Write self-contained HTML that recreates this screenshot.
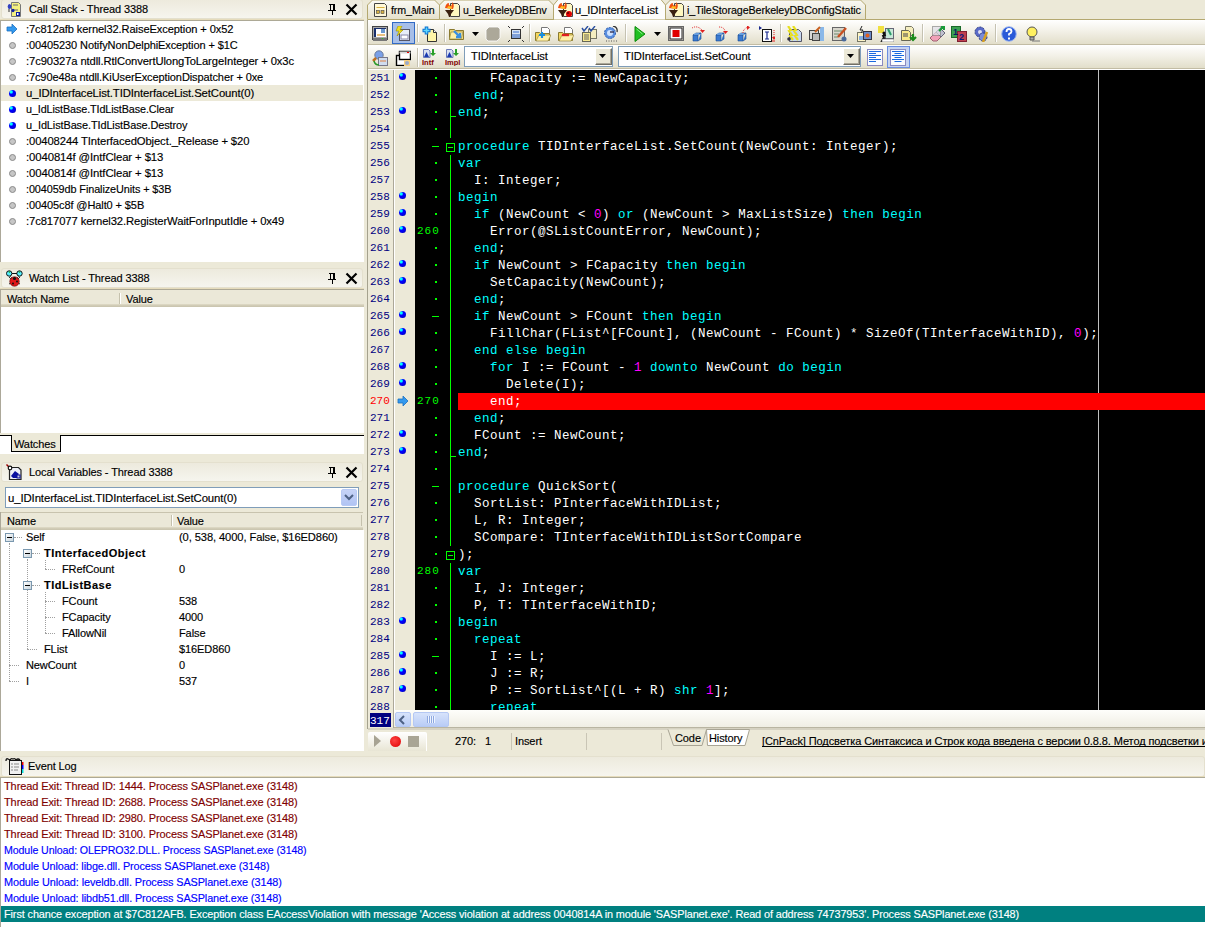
<!DOCTYPE html><html><head><meta charset="utf-8"><style>
*{margin:0;padding:0;box-sizing:border-box}
html,body{width:1205px;height:927px;overflow:hidden;background:#ECE9D8;font-family:"Liberation Sans",sans-serif;font-size:11px;color:#000}
.ab{position:absolute}
.t{position:absolute;white-space:pre;line-height:16px;letter-spacing:-0.1px;-webkit-text-stroke:0.15px currentColor}
.b{font-weight:bold;letter-spacing:0.45px}
.hdr{position:absolute;background:linear-gradient(#EDEADD,#F6F5EE);border:1px solid #E4E0CE;border-radius:3px}
.hline{position:absolute;height:2px;background:linear-gradient(#E6DCBC 50%,#ADA996 50%)}
.code{position:absolute;font-family:"Liberation Mono",monospace;font-size:12.5px;letter-spacing:0.5px;white-space:pre;line-height:17px;color:#fff}
.k{color:#00FFFF}.n{color:#FF00FF}
.ln{position:absolute;font-family:"Liberation Mono",monospace;font-size:11px;white-space:pre;line-height:17px;color:#000080}
.gn{position:absolute;font-family:"Liberation Mono",monospace;font-size:11px;letter-spacing:1px;white-space:pre;line-height:17px;color:#00FF00}
.dot{position:absolute;width:7px;height:7px;border-radius:50%;background:radial-gradient(circle at 32% 28%,#0ff 0,#0ff 14%,#00f 32%,#0000E8 65%,#000070 100%)}
.gdot{position:absolute;width:7px;height:7px;border-radius:50%;background:#C6C6C6;border:1px solid #8A8A8A}
</style></head><body>
<div class="hdr" style="left:1px;top:-1px;width:362px;height:20px"></div>
<svg class="ab" style="left:6px;top:1px" width="16" height="17"><path d="M5.5 1.5h7l2 2v12h-9z" fill="#F5F080" stroke="#777"/><path d="M7 4h5M7 9h5" stroke="#667"/><ellipse cx="3.5" cy="5.5" rx="1.8" ry="2.5" fill="#3040C0"/><ellipse cx="7" cy="9.5" rx="1.5" ry="1.8" fill="#1020A0"/><rect x="10" y="11" width="4" height="4" fill="#1020A0"/><rect x="11" y="12" width="1.5" height="2" fill="#fff"/><path d="M3 8v3" stroke="#333"/></svg>
<div class="t" style="left:29px;top:1px">Call Stack - Thread 3388</div>
<svg class="ab" style="left:327px;top:3px" width="10" height="12"><path d="M2 1h6M3 1v6M7 1v6M6 1v6M1 7h8M5 7v5" stroke="#000" stroke-width="1" fill="none" shape-rendering="crispEdges"/></svg>
<svg class="ab" style="left:345px;top:3px" width="13" height="13"><path d="M1.5 1.5L11.5 11.5M11.5 1.5L1.5 11.5" stroke="#000" stroke-width="2.2" fill="none"/></svg>
<div class="hline" style="left:0;top:19px;width:364px"></div>
<div class="ab" style="left:0;top:21px;width:364px;height:241px;background:#fff;border-left:1px solid #ACA899"></div>
<svg class="ab" style="left:6px;top:23px" width="12" height="12"><path d="M1 4h5V1l5 5-5 5V8H1z" fill="#3399ee" stroke="#1a6fc0" stroke-width="0.8"/></svg>
<div class="t" style="left:26px;top:21px;transform:scaleX(1.009);transform-origin:0 0">:7c812afb kernel32.RaiseException + 0x52</div>
<div class="gdot" style="left:9px;top:42px"></div>
<div class="t" style="left:26px;top:37px;transform:scaleX(1.0);transform-origin:0 0">:00405230 NotifyNonDelphiException + $1C</div>
<div class="gdot" style="left:9px;top:58px"></div>
<div class="t" style="left:26px;top:53px;transform:scaleX(1.019);transform-origin:0 0">:7c90327a ntdll.RtlConvertUlongToLargeInteger + 0x3c</div>
<div class="gdot" style="left:9px;top:74px"></div>
<div class="t" style="left:26px;top:69px;transform:scaleX(1.0);transform-origin:0 0">:7c90e48a ntdll.KiUserExceptionDispatcher + 0xe</div>
<div class="ab" style="left:1px;top:85px;width:362px;height:16px;background:#ECE9D8"></div>
<div class="dot" style="left:9px;top:90px"></div>
<div class="t" style="left:26px;top:85px;transform:scaleX(1.029);transform-origin:0 0">u_IDInterfaceList.TIDInterfaceList.SetCount(0)</div>
<div class="dot" style="left:9px;top:106px"></div>
<div class="t" style="left:26px;top:101px;transform:scaleX(0.98);transform-origin:0 0">u_IdListBase.TIdListBase.Clear</div>
<div class="dot" style="left:9px;top:122px"></div>
<div class="t" style="left:26px;top:117px;transform:scaleX(0.993);transform-origin:0 0">u_IdListBase.TIdListBase.Destroy</div>
<div class="gdot" style="left:9px;top:138px"></div>
<div class="t" style="left:26px;top:133px;transform:scaleX(1.022);transform-origin:0 0">:00408244 TInterfacedObject._Release + $20</div>
<div class="gdot" style="left:9px;top:154px"></div>
<div class="t" style="left:26px;top:149px;transform:scaleX(1.032);transform-origin:0 0">:0040814f @IntfClear + $13</div>
<div class="gdot" style="left:9px;top:170px"></div>
<div class="t" style="left:26px;top:165px;transform:scaleX(1.032);transform-origin:0 0">:0040814f @IntfClear + $13</div>
<div class="gdot" style="left:9px;top:186px"></div>
<div class="t" style="left:26px;top:181px;transform:scaleX(0.987);transform-origin:0 0">:004059db FinalizeUnits + $3B</div>
<div class="gdot" style="left:9px;top:202px"></div>
<div class="t" style="left:26px;top:197px;transform:scaleX(1.0);transform-origin:0 0">:00405c8f @Halt0 + $5B</div>
<div class="gdot" style="left:9px;top:218px"></div>
<div class="t" style="left:26px;top:213px;transform:scaleX(1.023);transform-origin:0 0">:7c817077 kernel32.RegisterWaitForInputIdle + 0x49</div>
<div class="hdr" style="left:1px;top:268px;width:362px;height:20px"></div>
<svg class="ab" style="left:5px;top:269px" width="20" height="18"><circle cx="4.2" cy="4.5" r="2.7" fill="#5ef" stroke="#111" stroke-width="1"/><circle cx="14.5" cy="4.5" r="2.7" fill="#5ef" stroke="#111" stroke-width="1"/><path d="M7 4.5h5" stroke="#111"/><path d="M4 3.5l1-1M14 3.5l1-1" stroke="#2a2" stroke-width="1.2"/><path d="M5 7l4 4M14 7l-4 4" stroke="#555"/><path d="M4 8l2 2M15 8l-2 2M4 15l2-1M15 15l-2-1" stroke="#333"/><circle cx="9.5" cy="12.5" r="4.8" fill="#E01818" stroke="#400" stroke-width=".5"/><circle cx="9.5" cy="9.5" r="1.6" fill="#111"/><circle cx="8" cy="14.5" r="1" fill="#111"/><circle cx="12" cy="12.5" r="1" fill="#111"/></svg>
<div class="t" style="left:29px;top:270px">Watch List - Thread 3388</div>
<svg class="ab" style="left:327px;top:272px" width="10" height="12"><path d="M2 1h6M3 1v6M7 1v6M6 1v6M1 7h8M5 7v5" stroke="#000" stroke-width="1" fill="none" shape-rendering="crispEdges"/></svg>
<svg class="ab" style="left:345px;top:272px" width="13" height="13"><path d="M1.5 1.5L11.5 11.5M11.5 1.5L1.5 11.5" stroke="#000" stroke-width="2.2" fill="none"/></svg>
<div class="hline" style="left:0;top:288px;width:364px"></div>
<div class="ab" style="left:0;top:290px;width:364px;height:17px;background:linear-gradient(#EBE8D8 0,#EBE8D8 14px,#E0DCC8 14px,#D6D1BC 15px,#CBC6B0 16px,#CBC6B0 17px);border-left:1px solid #ACA899"></div>
<div class="t" style="left:7px;top:291px">Watch Name</div>
<div class="ab" style="left:119px;top:293px;width:1px;height:11px;background:#C5C1AD"></div><div class="ab" style="left:120px;top:293px;width:1px;height:11px;background:#fff"></div>
<div class="t" style="left:126px;top:291px">Value</div>
<div class="ab" style="left:0;top:307px;width:364px;height:126px;background:#fff;border-left:1px solid #ACA899"></div>
<div class="ab" style="left:0;top:435px;width:364px;height:19px;background:#fff;border-top:1px solid #000"></div>
<div class="ab" style="left:11px;top:435px;width:50px;height:17px;background:#ECE9D8;border:1px solid #000;border-top:none"></div>
<div class="t" style="left:14px;top:436px">Watches</div>
<div class="hdr" style="left:1px;top:462px;width:362px;height:20px"></div>
<svg class="ab" style="left:5px;top:463px" width="20" height="20"><path d="M4.5 4.5h9l2.5 2.5v9.5h-11.5z" fill="#EEF0F8" stroke="#222" stroke-width="1.2"/><path d="M6 13l4-5 4 3-2 2v2H8z" fill="#0a10a0"/><rect x="12" y="12" width="3" height="3" fill="#ccd" stroke="#0a10a0"/><path d="M1.5 1.5L4 4" stroke="#900" stroke-width="1.5"/><circle cx="5" cy="5" r="1.8" fill="#fff" stroke="#111" stroke-width="1.2"/></svg>
<div class="t" style="left:29px;top:464px">Local Variables - Thread 3388</div>
<svg class="ab" style="left:327px;top:466px" width="10" height="12"><path d="M2 1h6M3 1v6M7 1v6M6 1v6M1 7h8M5 7v5" stroke="#000" stroke-width="1" fill="none" shape-rendering="crispEdges"/></svg>
<svg class="ab" style="left:345px;top:466px" width="13" height="13"><path d="M1.5 1.5L11.5 11.5M11.5 1.5L1.5 11.5" stroke="#000" stroke-width="2.2" fill="none"/></svg>
<div class="ab" style="left:5px;top:487px;width:354px;height:21px;background:#fff;border:1px solid #7F9DB9"></div>
<div class="t" style="left:8px;top:490px;transform:scaleX(1.033);transform-origin:0 0">u_IDInterfaceList.TIDInterfaceList.SetCount(0)</div>
<div class="ab" style="left:341px;top:489px;width:16px;height:17px;background:linear-gradient(#C6D3F7,#B1C4F4);border:1px solid #B8CAF5;border-radius:2px"></div>
<svg class="ab" style="left:344px;top:494px" width="10" height="8"><path d="M1 1l4 4 4-4" stroke="#4D6185" stroke-width="2" fill="none"/></svg>
<div class="ab" style="left:0;top:512px;width:363px;height:18px;background:linear-gradient(#C8C3AE 0,#C8C3AE 1px,#EBE8D8 1px,#EBE8D8 15px,#E0DCC8 15px,#D6D1BC 16px,#CBC6B0 17px,#CBC6B0 18px);border-left:1px solid #ACA899"></div>
<div class="t" style="left:7px;top:513px">Name</div>
<div class="ab" style="left:171px;top:515px;width:1px;height:11px;background:#C5C1AD"></div><div class="ab" style="left:172px;top:515px;width:1px;height:11px;background:#fff"></div><div class="ab" style="left:361px;top:515px;width:1px;height:11px;background:#C5C1AD"></div>
<div class="t" style="left:177px;top:513px">Value</div>
<div class="ab" style="left:0;top:530px;width:364px;height:221px;background:#fff;border-left:1px solid #ACA899"></div>
<div class="t" style="left:26px;top:529px;">Self</div>
<div class="t" style="left:179px;top:529px;transform:scaleX(1.014);transform-origin:0 0">(0, 538, 4000, False, $16ED860)</div>
<div class="t" style="left:44px;top:545px;font-weight:bold;letter-spacing:0.5px;">TInterfacedObject</div>
<div class="t" style="left:62px;top:561px;">FRefCount</div>
<div class="t" style="left:179px;top:561px;transform:scaleX(1);transform-origin:0 0">0</div>
<div class="t" style="left:44px;top:577px;font-weight:bold;letter-spacing:0.5px;">TIdListBase</div>
<div class="t" style="left:62px;top:593px;">FCount</div>
<div class="t" style="left:179px;top:593px;transform:scaleX(1);transform-origin:0 0">538</div>
<div class="t" style="left:62px;top:609px;">FCapacity</div>
<div class="t" style="left:179px;top:609px;transform:scaleX(1);transform-origin:0 0">4000</div>
<div class="t" style="left:62px;top:625px;">FAllowNil</div>
<div class="t" style="left:179px;top:625px;transform:scaleX(1);transform-origin:0 0">False</div>
<div class="t" style="left:44px;top:641px;">FList</div>
<div class="t" style="left:179px;top:641px;transform:scaleX(1);transform-origin:0 0">$16ED860</div>
<div class="t" style="left:26px;top:657px;">NewCount</div>
<div class="t" style="left:179px;top:657px;transform:scaleX(1);transform-origin:0 0">0</div>
<div class="t" style="left:26px;top:673px;">I</div>
<div class="t" style="left:179px;top:673px;transform:scaleX(1);transform-origin:0 0">537</div>
<div class="ab" style="left:9px;top:543px;width:0;height:138px;border-left:1px dotted #A0A0A0"></div>
<div class="ab" style="left:27px;top:559px;width:0;height:90px;border-left:1px dotted #A0A0A0"></div>
<div class="ab" style="left:45px;top:560px;width:0;height:9px;border-left:1px dotted #A0A0A0"></div>
<div class="ab" style="left:45px;top:592px;width:0;height:41px;border-left:1px dotted #A0A0A0"></div>
<div class="ab" style="left:14px;top:537px;width:8px;height:0;border-top:1px dotted #A0A0A0"></div>
<div class="ab" style="left:32px;top:553px;width:8px;height:0;border-top:1px dotted #A0A0A0"></div>
<div class="ab" style="left:45px;top:569px;width:10px;height:0;border-top:1px dotted #A0A0A0"></div>
<div class="ab" style="left:32px;top:585px;width:8px;height:0;border-top:1px dotted #A0A0A0"></div>
<div class="ab" style="left:45px;top:601px;width:10px;height:0;border-top:1px dotted #A0A0A0"></div>
<div class="ab" style="left:45px;top:617px;width:10px;height:0;border-top:1px dotted #A0A0A0"></div>
<div class="ab" style="left:45px;top:633px;width:10px;height:0;border-top:1px dotted #A0A0A0"></div>
<div class="ab" style="left:27px;top:649px;width:10px;height:0;border-top:1px dotted #A0A0A0"></div>
<div class="ab" style="left:9px;top:665px;width:10px;height:0;border-top:1px dotted #A0A0A0"></div>
<div class="ab" style="left:9px;top:681px;width:10px;height:0;border-top:1px dotted #A0A0A0"></div>
<div class="ab" style="left:5px;top:533px;width:9px;height:9px;border:1px solid #7A98AF;background:linear-gradient(135deg,#fff,#C8D4DC)"></div>
<div class="ab" style="left:7px;top:537px;width:5px;height:1px;background:#000"></div>
<div class="ab" style="left:23px;top:549px;width:9px;height:9px;border:1px solid #7A98AF;background:linear-gradient(135deg,#fff,#C8D4DC)"></div>
<div class="ab" style="left:25px;top:553px;width:5px;height:1px;background:#000"></div>
<div class="ab" style="left:23px;top:581px;width:9px;height:9px;border:1px solid #7A98AF;background:linear-gradient(135deg,#fff,#C8D4DC)"></div>
<div class="ab" style="left:25px;top:585px;width:5px;height:1px;background:#000"></div>
<div class="ab" style="left:368px;top:0;width:837px;height:20px;background:#ECE9D8"></div>
<svg class="ab" style="left:0;top:0" width="1205" height="21"><defs><linearGradient id="tg" x1="0" y1="0" x2="0" y2="1"><stop offset="0" stop-color="#FBFAF6"/><stop offset="1" stop-color="#E4E0CB"/></linearGradient></defs><path d="M368 19.5H1205" stroke="#B4A870"/><path d="M367.5 19.5V5L372.5 0H434.5L439.5 5V19.5z" fill="url(#tg)" stroke="#B4A870"/><path d="M439.5 19.5V5L444.5 0H548.5L553.5 5V19.5z" fill="url(#tg)" stroke="#B4A870"/><path d="M665.5 19.5V5L670.5 0H860.5L865.5 5V19.5z" fill="url(#tg)" stroke="#B4A870"/><path d="M553.5 20V5L558.5 -1H660.5L665.5 5V20z" fill="#FCFCFA" stroke="#B4A870"/></svg>
<svg class="ab" style="left:373px;top:2px" width="16" height="16"><path d="M1.5 1.5h10l2 2v11h-12z" fill="#FFF8D8" stroke="#444"/><rect x="3.5" y="5" width="8" height="1" fill="#D8B040"/><rect x="3.5" y="8.5" width="3" height="3" fill="#D8B040" stroke="#444" stroke-width=".6"/><rect x="8" y="8.5" width="3" height="3" fill="#D8B040" stroke="#444" stroke-width=".6"/></svg>
<div class="t" style="left:391px;top:2px;transform:scaleX(0.97);transform-origin:0 0">frm_Main</div>
<svg class="ab" style="left:444px;top:2px" width="17" height="16"><path d="M6.5 1.5h7l2 2v11h-9z" fill="#FFF8C0" stroke="#444"/><path d="M1 6q1-5 4-5q-1 2 2 3q2-2 1-4q3 2 1 7z" fill="#F05010"/><path d="M3 6q1-2 2-2q1 1 3 0q0 2-1 3z" fill="#FFC020"/><path d="M1 8h9l-3 4H4z" fill="#3a2010"/><path d="M4 12l1 3h1l1-3" fill="#3a2010"/></svg>
<div class="t" style="left:463px;top:2px;transform:scaleX(0.954);transform-origin:0 0">u_BerkeleyDBEnv</div>
<svg class="ab" style="left:557px;top:2px" width="17" height="16"><path d="M6.5 1.5h7l2 2v11h-9z" fill="#FFF8C0" stroke="#444"/><path d="M1 6q1-5 4-5q-1 2 2 3q2-2 1-4q3 2 1 7z" fill="#F05010"/><path d="M3 6q1-2 2-2q1 1 3 0q0 2-1 3z" fill="#FFC020"/><path d="M1 8h9l-3 4H4z" fill="#3a2010"/><path d="M4 12l1 3h1l1-3" fill="#3a2010"/><circle cx="12" cy="12" r="3" fill="#E00000"/><circle cx="11" cy="11" r="0.8" fill="#000"/></svg>
<div class="t" style="left:575px;top:2px;transform:scaleX(1.018);transform-origin:0 0">u_IDInterfaceList</div>
<svg class="ab" style="left:668px;top:2px" width="17" height="16"><path d="M6.5 1.5h7l2 2v11h-9z" fill="#FFF8C0" stroke="#444"/><path d="M1 6q1-5 4-5q-1 2 2 3q2-2 1-4q3 2 1 7z" fill="#F05010"/><path d="M3 6q1-2 2-2q1 1 3 0q0 2-1 3z" fill="#FFC020"/><path d="M1 8h9l-3 4H4z" fill="#3a2010"/><path d="M4 12l1 3h1l1-3" fill="#3a2010"/></svg>
<div class="t" style="left:687px;top:2px;transform:scaleX(0.975);transform-origin:0 0">i_TileStorageBerkeleyDBConfigStatic</div>
<div class="ab" style="left:368px;top:20px;width:837px;height:25px;background:linear-gradient(#FFFFFF,#F3F1E8 45%,#E2DECA);border-bottom:1px solid #C2BCA4"></div>
<div class="ab" style="left:368px;top:45px;width:837px;height:24px;background:linear-gradient(#FFFFFF,#F3F1E8 45%,#E2DECA);border-bottom:1px solid #C2BCA4"></div>
<div class="ab" style="left:368px;top:69px;width:837px;height:1px;background:#fff"></div>
<div class="ab" style="left:392px;top:22px;width:23px;height:22px;background:#A6BEE8;border:1px solid #316AC5"></div>
<div class="ab" style="left:887px;top:46px;width:23px;height:22px;background:#C6D4F2;border:1px solid #6A8EE0"></div>
<svg class="ab" style="left:372px;top:26px" width="16" height="16"><rect x="0.5" y="0.5" width="15" height="13" fill="#A8A8A8" stroke="#444"/><rect x="2" y="2" width="12" height="9" fill="#fff"/><rect x="2" y="2" width="2" height="9" fill="#1a2f6a"/><rect x="2" y="2" width="12" height="1" fill="#1a2f6a"/><rect x="5" y="8" width="8" height="2" fill="#e8c080"/><rect x="9" y="3" width="4" height="4" fill="#6a98d0"/><rect x="1" y="12" width="14" height="3" fill="#777"/><rect x="10" y="12" width="1" height="1" fill="#2c2"/></svg>
<svg class="ab" style="left:395px;top:26px" width="16" height="16"><rect x="4.5" y="3.5" width="10" height="11" fill="#E8EEF8" stroke="#556"/><rect x="6" y="9" width="7" height="4" fill="#fff" stroke="#88a"/><path d="M3 0l-2 5h3l-2 5 6-6H5l2-4z" fill="#F0E020" stroke="#a09000" stroke-width=".6"/></svg>
<svg class="ab" style="left:422px;top:26px" width="16" height="16"><path d="M5.5 3.5h6l3 3v9h-9z" fill="#FFF5A8" stroke="#333"/><path d="M11.5 3.5v3h3" fill="#fff" stroke="#333"/><path d="M4.5 0.5v8M0.5 4.5h8" stroke="#0a70d0" stroke-width="3.6"/><path d="M4.5 1.5v6M1.5 4.5h6" stroke="#5fd8ff" stroke-width="1.6"/></svg>
<svg class="ab" style="left:449px;top:26px" width="16" height="16"><path d="M0.5 3.5h5l1 1h8v9H0.5z" fill="#F2D97A" stroke="#8a7a30"/><path d="M2 6h12l-2 7H0.5z" fill="#FFF0A8" stroke="#8a7a30" stroke-width=".6"/><path d="M5 5l6 6M11 7v4H7" stroke="#3a90e0" stroke-width="2.4" fill="none"/></svg>
<svg class="ab" style="left:485px;top:26px" width="16" height="16"><path d="M4 1h9l2 2v9l-3 3H3l-2-2V4z" fill="#ACA899" stroke="#fff" stroke-width=".8"/></svg>
<svg class="ab" style="left:508px;top:26px" width="16" height="16"><rect x="3.5" y="3.5" width="9" height="9" fill="#D8E4F4" stroke="#333"/><rect x="4" y="8" width="8" height="4" fill="#7FA0D8"/><path d="M5 6h6" stroke="#3a6ed0"/><path d="M0 0l2 2M16 0l-2 2M0 16l2-2M16 16l-2-2" stroke="#333"/></svg>
<svg class="ab" style="left:535px;top:26px" width="16" height="16"><path d="M6.5 1.5h6l2 2v8h-8z" fill="#fff" stroke="#777"/><path d="M0.5 6.5h4l1 1h9v7H0.5z" fill="#F5D860" stroke="#8a7a30"/><path d="M1 15l3-6h12l-3 6z" fill="#FFF0A8" stroke="#8a7a30" stroke-width=".6"/><path d="M7 6v6M4 9h6" stroke="#1a8fe0" stroke-width="2.2"/></svg>
<svg class="ab" style="left:558px;top:26px" width="16" height="16"><path d="M6.5 1.5h6l2 2v8h-8z" fill="#fff" stroke="#777"/><path d="M0.5 6.5h4l1 1h9v7H0.5z" fill="#F5D860" stroke="#8a7a30"/><path d="M1 15l3-6h12l-3 6z" fill="#FFF0A8" stroke="#8a7a30" stroke-width=".6"/><path d="M4 9h7" stroke="#e02020" stroke-width="2.4"/></svg>
<svg class="ab" style="left:581px;top:26px" width="16" height="16"><rect x="7.5" y="3.5" width="8" height="9" fill="#F5EEC0" stroke="#776"/><rect x="1.5" y="6.5" width="8" height="9" fill="#F8EA90" stroke="#665"/><path d="M3 9h5M3 11h5M3 13h5" stroke="#666"/><path d="M1 2l2 3 4-5M8 2l2 3 4-5" stroke="#2a4fa0" stroke-width="1.4" fill="none"/></svg>
<svg class="ab" style="left:603px;top:26px" width="16" height="16"><circle cx="7" cy="7" r="5.5" fill="#5a8fe0" stroke="#2a5ab0" stroke-dasharray="2 1"/><circle cx="7" cy="7" r="3" fill="#cfe3ff"/><path d="M7 6h4" stroke="#335" stroke-width="1.4"/><path d="M10 0q5 1 4 6" stroke="#333" fill="none" stroke-width="1.3"/><path d="M3 15h12" stroke="#555" stroke-dasharray="1 1.5"/></svg>
<svg class="ab" style="left:668px;top:26px" width="16" height="16"><rect x="0.5" y="0.5" width="15" height="14" fill="#D4D0C8" stroke="#666"/><rect x="2" y="2" width="12" height="11" fill="#fff" stroke="#222"/><rect x="4.5" y="4" width="7" height="7" fill="#E00000"/></svg>
<svg class="ab" style="left:691px;top:26px" width="16" height="16"><path d="M2 9l3-2h5l-3 2zM2 9v6h5V9M7 15l3-2V7" fill="#3a7ad0" stroke="#1a4a90" stroke-width=".6"/><path d="M3 8h5" stroke="#9cf"/><path d="M1 2q5-3 10 2" stroke="#e02020" stroke-dasharray="1 1" fill="none"/><path d="M9 4h5l-2.5 3z" fill="#e02020"/></svg>
<svg class="ab" style="left:714px;top:26px" width="16" height="16"><path d="M2 9l3-2h5l-3 2zM2 9v6h5V9M7 15l3-2V7" fill="#3a7ad0" stroke="#1a4a90" stroke-width=".6"/><path d="M3 8h5" stroke="#9cf"/><path d="M5 1q5 0 6 4" stroke="#e02020" stroke-dasharray="1 1" fill="none"/><path d="M9 5h5l-2.5 3z" fill="#e02020"/></svg>
<svg class="ab" style="left:736px;top:26px" width="16" height="16"><path d="M2 9l3-2h5l-3 2zM2 9v6h5V9M7 15l3-2V7" fill="#3a7ad0" stroke="#1a4a90" stroke-width=".6"/><path d="M3 8h5" stroke="#9cf"/><path d="M7 7q0-4 5-6" stroke="#e02020" stroke-dasharray="1 1" fill="none"/><path d="M11 -1v5l3-2.5z" fill="#e02020"/></svg>
<svg class="ab" style="left:759px;top:26px" width="16" height="16"><rect x="3.5" y="3.5" width="9" height="12" fill="#fff" stroke="#111"/><path d="M6 6h4M8 6v7M6 13h4" stroke="#1a2a90" stroke-width="1.2"/><path d="M0 0l3 2-3 2z" fill="#1a2a90"/><path d="M15 4v8" stroke="#e02020" stroke-dasharray="1 1"/><path d="M13 11h4l-2 3z" fill="#e02020"/><path d="M13 15h4" stroke="#e02020"/></svg>
<svg class="ab" style="left:786px;top:26px" width="16" height="16"><path d="M3.5 3.5h9l3 3v9h-12z" fill="#C8D8F0" stroke="#556"/><path d="M2 0l3 4-2 1 3 4-2 1 3 4M7 0l3 4-2 1 3 4-2 1 3 4" stroke="#E8E020" stroke-width="2.2" fill="none"/><circle cx="3" cy="13" r="1.8" fill="#334"/></svg>
<svg class="ab" style="left:809px;top:26px" width="16" height="16"><rect x="0.5" y="4.5" width="9" height="9" fill="#D8D8D8" stroke="#444"/><rect x="3.5" y="7.5" width="7" height="7" fill="#BBB" stroke="#444"/><rect x="11" y="1" width="4" height="14" fill="#8ab8e8"/><path d="M6 6l5-5" stroke="#c86020" stroke-width="2"/></svg>
<svg class="ab" style="left:832px;top:26px" width="16" height="16"><rect x="0.5" y="1.5" width="12" height="13" fill="#D8D6CC" stroke="#666"/><path d="M2 5h8M2 8h5M2 11h4" stroke="#6a8a6a"/><path d="M6 11l8-9" stroke="#c85020" stroke-width="2.4"/><circle cx="12" cy="13" r="2.5" fill="#4a6a9a"/></svg>
<svg class="ab" style="left:856px;top:26px" width="16" height="16"><rect x="1.5" y="6.5" width="8" height="9" fill="#FFF6C8" stroke="#776"/><rect x="7.5" y="5.5" width="8" height="8" fill="#6a8ac8" stroke="#334"/><circle cx="11.5" cy="9.5" r="2" fill="#e06020"/><path d="M6 0l-2 4h3l-2 3" stroke="#222" fill="none"/><rect x="3" y="10" width="4" height="4" fill="#8ab0e0"/></svg>
<svg class="ab" style="left:878px;top:26px" width="16" height="16"><rect x="0" y="0" width="6" height="7" fill="#F0E040"/><rect x="7.5" y="2.5" width="8" height="10" fill="#C8E8D8" stroke="#667"/><path d="M10 3l3 6" stroke="#2a9a6a" stroke-width="2"/><circle cx="6" cy="7" r="1.6" fill="#111"/><path d="M6 8v4l-3 4M6 12l3 3M4 10l4-1" stroke="#111" stroke-width="1.5"/><rect x="4" y="13" width="12" height="3" fill="#fff" stroke="#666" stroke-width=".6"/></svg>
<svg class="ab" style="left:901px;top:26px" width="16" height="16"><path d="M4.5 0.5h6l2 2v7h-8z" fill="#F5EEC0" stroke="#776"/><path d="M0.5 4.5h7l2 2v8h-9z" fill="#F8E888" stroke="#665"/><path d="M2 8h5M2 10h5" stroke="#445"/><path d="M9 11l3 3 3-3M12 8v6" stroke="#1a8a1a" stroke-width="2.2" fill="none"/></svg>
<svg class="ab" style="left:929px;top:26px" width="16" height="16"><path d="M1 12l6-6 5 5-4 4H4z" fill="#F0A0B8" stroke="#a06070"/><path d="M7 6l4-4 5 5-4 4z" fill="#C0C0D0" stroke="#667"/><rect x="3.5" y="0.5" width="8" height="9" fill="#E0E0E8" stroke="#888" opacity=".7"/><path d="M10 5l4-4M12 1h3v3" stroke="#1a9a3a" stroke-width="2" fill="none"/></svg>
<svg class="ab" style="left:951px;top:26px" width="16" height="16"><rect x="0.5" y="0.5" width="9" height="11" fill="#3aa050" stroke="#1a6a2a"/><rect x="6.5" y="5.5" width="9" height="10" fill="#C04050" stroke="#802030"/><text x="2" y="9" font-family="Liberation Sans" font-weight="bold" font-size="9" fill="#0a1a60">1</text><text x="8" y="14" font-family="Liberation Sans" font-weight="bold" font-size="9" fill="#0a1a80">2</text></svg>
<svg class="ab" style="left:974px;top:26px" width="16" height="16"><circle cx="6" cy="6" r="5" fill="#5a6ac8" stroke="#2a3a80" stroke-dasharray="2 1.2"/><circle cx="6" cy="6" r="2" fill="#e0e0f0"/><circle cx="9" cy="11" r="4" fill="#7a8ad8" stroke="#2a3a80" stroke-dasharray="2 1"/><path d="M13 6l-4 10" stroke="#d8a020" stroke-width="2.5"/></svg>
<svg class="ab" style="left:1001px;top:26px" width="16" height="16"><circle cx="8" cy="8" r="7.3" fill="#2a5ad8" stroke="#a0b8f0"/><path d="M5.5 6q0-3 2.5-3t2.5 2.5q0 1.5-2.5 2.5v1.5" stroke="#fff" stroke-width="1.8" fill="none"/><rect x="7" y="11.5" width="2" height="2" fill="#fff"/></svg>
<svg class="ab" style="left:1025px;top:26px" width="16" height="16"><circle cx="7" cy="6" r="5" fill="#FFF060" stroke="#555"/><path d="M5 11h4v3H5z" fill="#aaa" stroke="#555"/><path d="M7 15h8" stroke="#777"/></svg>
<div class="ab" style="left:417px;top:24px;width:1px;height:18px;background:#C5C2B2"></div>
<div class="ab" style="left:418px;top:24px;width:1px;height:18px;background:#fff"></div>
<div class="ab" style="left:444px;top:24px;width:1px;height:18px;background:#C5C2B2"></div>
<div class="ab" style="left:445px;top:24px;width:1px;height:18px;background:#fff"></div>
<div class="ab" style="left:529px;top:24px;width:1px;height:18px;background:#C5C2B2"></div>
<div class="ab" style="left:530px;top:24px;width:1px;height:18px;background:#fff"></div>
<div class="ab" style="left:625px;top:24px;width:1px;height:18px;background:#C5C2B2"></div>
<div class="ab" style="left:626px;top:24px;width:1px;height:18px;background:#fff"></div>
<div class="ab" style="left:780px;top:24px;width:1px;height:18px;background:#C5C2B2"></div>
<div class="ab" style="left:781px;top:24px;width:1px;height:18px;background:#fff"></div>
<div class="ab" style="left:922px;top:24px;width:1px;height:18px;background:#C5C2B2"></div>
<div class="ab" style="left:923px;top:24px;width:1px;height:18px;background:#fff"></div>
<div class="ab" style="left:995px;top:24px;width:1px;height:18px;background:#C5C2B2"></div>
<div class="ab" style="left:996px;top:24px;width:1px;height:18px;background:#fff"></div>
<svg class="ab" style="left:472px;top:32px" width="8" height="5"><path d="M0 0h7L3.5 4z" fill="#000"/></svg>
<svg class="ab" style="left:654px;top:32px" width="8" height="5"><path d="M0 0h7L3.5 4z" fill="#000"/></svg>
<svg class="ab" style="left:634px;top:26px" width="16" height="16"><path d="M1 0.5l10 7.5-10 7.5z" fill="#22C022" stroke="#0a8a0a"/><path d="M2.5 3l6 5" stroke="#90f090"/></svg>
<svg class="ab" style="left:372px;top:50px" width="16" height="16"><circle cx="7" cy="5" r="4.2" fill="#7aa0e8" stroke="#6a7a9a"/><path d="M4 8l-3 3" stroke="#c07020" stroke-width="2.5"/><rect x="6.5" y="7.5" width="9" height="8" fill="#D0DCEF" stroke="#778"/><path d="M8 11h6" stroke="#e08040"/><path d="M2 11q1 4 5 4" stroke="#2a9a2a" stroke-width="1.5" fill="none"/></svg>
<svg class="ab" style="left:395px;top:50px" width="16" height="16"><rect x="1.5" y="5.5" width="10" height="10" fill="#fff" stroke="#000" stroke-width="1.4"/><rect x="4.5" y="1.5" width="11" height="8" fill="#fff" stroke="#000" stroke-width="1.4"/><rect x="4.5" y="1.5" width="11" height="2" fill="#d8d8d8"/><rect x="12" y="2" width="2" height="1" fill="#e00"/><rect x="9" y="10" width="6" height="6" fill="#F8D080"/><circle cx="12" cy="13" r="2" fill="#9ac"/></svg>
<div class="ab" style="left:417px;top:48px;width:1px;height:19px;background:#C5C2B2"></div>
<div class="ab" style="left:418px;top:48px;width:1px;height:19px;background:#fff"></div>
<svg class="ab" style="left:422px;top:48px" width="17" height="18"><path d="M1.5 1.5h5l1.5 1.5v6.5H1.5z" fill="#D8E0F0" stroke="#6a7ab8"/><path d="M2 9l2.5-5 2.5 5z" fill="#1a3ab0"/><path d="M10 1h2v4h2l-3 3-3-3h2z" fill="#2aa02a"/><text x="0" y="17" font-family="Liberation Sans" font-weight="bold" font-size="7.5" fill="#800000">Intf</text></svg>
<svg class="ab" style="left:445px;top:48px" width="17" height="18"><path d="M1.5 1.5h5l1.5 1.5v6.5H1.5z" fill="#D8E0F0" stroke="#6a7ab8"/><path d="M2 9l2.5-5 2.5 5z" fill="#1a3ab0"/><path d="M10 1h2v4h2l-3 3-3-3h2z" fill="#2aa02a"/><text x="0" y="17" font-family="Liberation Sans" font-weight="bold" font-size="7.5" fill="#800000">Impl</text></svg>
<div class="ab" style="left:464px;top:46px;width:149px;height:21px;background:#fff;border:1px solid #7F9DB9"></div>
<div class="t" style="left:471px;top:48px;transform:scaleX(1.01);transform-origin:0 0">TIDInterfaceList</div>
<div class="ab" style="left:595px;top:48px;width:17px;height:17px;background:#ECE9D8;border-top:1px solid #fff;border-left:1px solid #fff;border-right:1px solid #716F64;border-bottom:1px solid #716F64;box-shadow:inset -1px -1px #ACA899"></div>
<svg class="ab" style="left:599px;top:54px" width="8" height="5"><path d="M0 0h7L3.5 4z" fill="#000"/></svg>
<div class="ab" style="left:618px;top:46px;width:243px;height:21px;background:#fff;border:1px solid #7F9DB9"></div>
<div class="t" style="left:624px;top:48px;transform:scaleX(1.02);transform-origin:0 0">TIDInterfaceList.SetCount</div>
<div class="ab" style="left:843px;top:48px;width:17px;height:17px;background:#ECE9D8;border-top:1px solid #fff;border-left:1px solid #fff;border-right:1px solid #716F64;border-bottom:1px solid #716F64;box-shadow:inset -1px -1px #ACA899"></div>
<svg class="ab" style="left:847px;top:54px" width="8" height="5"><path d="M0 0h7L3.5 4z" fill="#000"/></svg>
<svg class="ab" style="left:867px;top:49px" width="16" height="17"><rect x="0.5" y="0.5" width="15" height="16" fill="#FAFCFF" stroke="#8A8AC0"/><path d="M2 2.5h12M2 4.5h7M2 6.5h12M2 8.5h7M2 10.5h12M2 12.5h7" stroke="#1a6ae0"/></svg>
<svg class="ab" style="left:890px;top:49px" width="16" height="17"><rect x="0.5" y="0.5" width="15" height="16" fill="#FAFCFF" stroke="#8A8AC0"/><path d="M2 2.5h12M4.5 4.5h7M2 6.5h12M4.5 8.5h7M2 10.5h12M4.5 12.5h7" stroke="#1a6ae0"/></svg>
<div class="ab" style="left:368px;top:70px;width:837px;height:640px;background:#000"></div>
<div class="ab" style="left:368px;top:70px;width:47px;height:640px;background:#ECE9D8"></div>
<div class="ab" style="left:367px;top:20px;width:1px;height:709px;background:#A5A28E"></div>
<div class="ab" style="left:393px;top:70px;width:1px;height:640px;background:#ACA899"></div>
<div class="ab" style="left:394px;top:70px;width:1px;height:640px;background:#fff"></div>
<div class="ab" style="left:1098px;top:70px;width:1px;height:640px;background:#C0C0C0"></div>
<div class="ab" style="left:450px;top:70px;width:1px;height:68px;background:#00FF00"></div>
<div class="ab" style="left:450px;top:155px;width:1px;height:391px;background:#00FF00"></div>
<div class="ab" style="left:450px;top:563px;width:1px;height:147px;background:#00FF00"></div>
<div class="ab" style="left:458px;top:393px;width:747px;height:17px;background:#FF0000"></div>
<div class="ab" style="left:368px;top:70px;width:837px;height:640px;overflow:hidden">
<div class="ln" style="left:2px;top:0px;color:#000080">251</div>
<div class="dot" style="left:31px;top:3px"></div>
<div class="ab" style="left:67px;top:7px;width:2px;height:2px;background:#00FF00"></div>
<div class="code" style="left:90px;top:1px">    FCapacity := NewCapacity;</div>
<div class="ln" style="left:2px;top:17px;color:#000080">252</div>
<div class="ab" style="left:67px;top:24px;width:2px;height:2px;background:#00FF00"></div>
<div class="code" style="left:90px;top:18px">  <span class="k">end</span>;</div>
<div class="ln" style="left:2px;top:34px;color:#000080">253</div>
<div class="dot" style="left:31px;top:37px"></div>
<div class="ab" style="left:67px;top:41px;width:2px;height:2px;background:#00FF00"></div>
<div class="code" style="left:90px;top:35px"><span class="k">end</span>;</div>
<div class="ln" style="left:2px;top:51px;color:#000080">254</div>
<div class="ab" style="left:67px;top:58px;width:2px;height:2px;background:#00FF00"></div>
<div class="code" style="left:90px;top:52px"></div>
<div class="ln" style="left:2px;top:68px;color:#000080">255</div>
<div class="ab" style="left:64px;top:76px;width:7px;height:1px;background:#00FF00"></div>
<div class="code" style="left:90px;top:69px"><span class="k">procedure</span> TIDInterfaceList.SetCount(NewCount: Integer);</div>
<div class="ln" style="left:2px;top:85px;color:#000080">256</div>
<div class="ab" style="left:67px;top:92px;width:2px;height:2px;background:#00FF00"></div>
<div class="code" style="left:90px;top:86px"><span class="k">var</span></div>
<div class="ln" style="left:2px;top:102px;color:#000080">257</div>
<div class="ab" style="left:67px;top:109px;width:2px;height:2px;background:#00FF00"></div>
<div class="code" style="left:90px;top:103px">  I: Integer;</div>
<div class="ln" style="left:2px;top:119px;color:#000080">258</div>
<div class="dot" style="left:31px;top:122px"></div>
<div class="ab" style="left:67px;top:126px;width:2px;height:2px;background:#00FF00"></div>
<div class="code" style="left:90px;top:120px"><span class="k">begin</span></div>
<div class="ln" style="left:2px;top:136px;color:#000080">259</div>
<div class="dot" style="left:31px;top:139px"></div>
<div class="ab" style="left:67px;top:143px;width:2px;height:2px;background:#00FF00"></div>
<div class="code" style="left:90px;top:137px">  <span class="k">if</span> (NewCount &lt; <span class="n">0</span>) <span class="k">or</span> (NewCount &gt; MaxListSize) <span class="k">then begin</span></div>
<div class="ln" style="left:2px;top:153px;color:#000080">260</div>
<div class="dot" style="left:31px;top:156px"></div>
<div class="gn" style="left:49px;top:153px">260</div>
<div class="code" style="left:90px;top:154px">    Error(@SListCountError, NewCount);</div>
<div class="ln" style="left:2px;top:170px;color:#000080">261</div>
<div class="ab" style="left:67px;top:177px;width:2px;height:2px;background:#00FF00"></div>
<div class="code" style="left:90px;top:171px">  <span class="k">end</span>;</div>
<div class="ln" style="left:2px;top:187px;color:#000080">262</div>
<div class="dot" style="left:31px;top:190px"></div>
<div class="ab" style="left:67px;top:194px;width:2px;height:2px;background:#00FF00"></div>
<div class="code" style="left:90px;top:188px">  <span class="k">if</span> NewCount &gt; FCapacity <span class="k">then begin</span></div>
<div class="ln" style="left:2px;top:204px;color:#000080">263</div>
<div class="dot" style="left:31px;top:207px"></div>
<div class="ab" style="left:67px;top:211px;width:2px;height:2px;background:#00FF00"></div>
<div class="code" style="left:90px;top:205px">    SetCapacity(NewCount);</div>
<div class="ln" style="left:2px;top:221px;color:#000080">264</div>
<div class="ab" style="left:67px;top:228px;width:2px;height:2px;background:#00FF00"></div>
<div class="code" style="left:90px;top:222px">  <span class="k">end</span>;</div>
<div class="ln" style="left:2px;top:238px;color:#000080">265</div>
<div class="dot" style="left:31px;top:241px"></div>
<div class="ab" style="left:64px;top:246px;width:7px;height:1px;background:#00FF00"></div>
<div class="code" style="left:90px;top:239px">  <span class="k">if</span> NewCount &gt; FCount <span class="k">then begin</span></div>
<div class="ln" style="left:2px;top:255px;color:#000080">266</div>
<div class="dot" style="left:31px;top:258px"></div>
<div class="ab" style="left:67px;top:262px;width:2px;height:2px;background:#00FF00"></div>
<div class="code" style="left:90px;top:256px">    FillChar(FList^[FCount], (NewCount - FCount) * SizeOf(TInterfaceWithID), <span class="n">0</span>);</div>
<div class="ln" style="left:2px;top:272px;color:#000080">267</div>
<div class="ab" style="left:67px;top:279px;width:2px;height:2px;background:#00FF00"></div>
<div class="code" style="left:90px;top:273px">  <span class="k">end else begin</span></div>
<div class="ln" style="left:2px;top:289px;color:#000080">268</div>
<div class="dot" style="left:31px;top:292px"></div>
<div class="ab" style="left:67px;top:296px;width:2px;height:2px;background:#00FF00"></div>
<div class="code" style="left:90px;top:290px">    <span class="k">for</span> I := FCount - <span class="n">1</span> <span class="k">downto</span> NewCount <span class="k">do begin</span></div>
<div class="ln" style="left:2px;top:306px;color:#000080">269</div>
<div class="dot" style="left:31px;top:309px"></div>
<div class="ab" style="left:67px;top:313px;width:2px;height:2px;background:#00FF00"></div>
<div class="code" style="left:90px;top:307px">      Delete(I);</div>
<div class="ln" style="left:2px;top:323px;color:#FF0000">270</div>
<div class="gn" style="left:49px;top:323px">270</div>
<div class="code" style="left:90px;top:324px">    end;</div>
<div class="ln" style="left:2px;top:340px;color:#000080">271</div>
<div class="ab" style="left:67px;top:347px;width:2px;height:2px;background:#00FF00"></div>
<div class="code" style="left:90px;top:341px">  <span class="k">end</span>;</div>
<div class="ln" style="left:2px;top:357px;color:#000080">272</div>
<div class="dot" style="left:31px;top:360px"></div>
<div class="ab" style="left:67px;top:364px;width:2px;height:2px;background:#00FF00"></div>
<div class="code" style="left:90px;top:358px">  FCount := NewCount;</div>
<div class="ln" style="left:2px;top:374px;color:#000080">273</div>
<div class="dot" style="left:31px;top:377px"></div>
<div class="ab" style="left:67px;top:381px;width:2px;height:2px;background:#00FF00"></div>
<div class="code" style="left:90px;top:375px"><span class="k">end</span>;</div>
<div class="ln" style="left:2px;top:391px;color:#000080">274</div>
<div class="ab" style="left:67px;top:398px;width:2px;height:2px;background:#00FF00"></div>
<div class="code" style="left:90px;top:392px"></div>
<div class="ln" style="left:2px;top:408px;color:#000080">275</div>
<div class="ab" style="left:64px;top:416px;width:7px;height:1px;background:#00FF00"></div>
<div class="code" style="left:90px;top:409px"><span class="k">procedure</span> QuickSort(</div>
<div class="ln" style="left:2px;top:425px;color:#000080">276</div>
<div class="ab" style="left:67px;top:432px;width:2px;height:2px;background:#00FF00"></div>
<div class="code" style="left:90px;top:426px">  SortList: PInterfaceWithIDList;</div>
<div class="ln" style="left:2px;top:442px;color:#000080">277</div>
<div class="ab" style="left:67px;top:449px;width:2px;height:2px;background:#00FF00"></div>
<div class="code" style="left:90px;top:443px">  L, R: Integer;</div>
<div class="ln" style="left:2px;top:459px;color:#000080">278</div>
<div class="ab" style="left:67px;top:466px;width:2px;height:2px;background:#00FF00"></div>
<div class="code" style="left:90px;top:460px">  SCompare: TInterfaceWithIDListSortCompare</div>
<div class="ln" style="left:2px;top:476px;color:#000080">279</div>
<div class="ab" style="left:67px;top:483px;width:2px;height:2px;background:#00FF00"></div>
<div class="code" style="left:90px;top:477px">);</div>
<div class="ln" style="left:2px;top:493px;color:#000080">280</div>
<div class="gn" style="left:49px;top:493px">280</div>
<div class="code" style="left:90px;top:494px"><span class="k">var</span></div>
<div class="ln" style="left:2px;top:510px;color:#000080">281</div>
<div class="ab" style="left:67px;top:517px;width:2px;height:2px;background:#00FF00"></div>
<div class="code" style="left:90px;top:511px">  I, J: Integer;</div>
<div class="ln" style="left:2px;top:527px;color:#000080">282</div>
<div class="ab" style="left:67px;top:534px;width:2px;height:2px;background:#00FF00"></div>
<div class="code" style="left:90px;top:528px">  P, T: TInterfaceWithID;</div>
<div class="ln" style="left:2px;top:544px;color:#000080">283</div>
<div class="dot" style="left:31px;top:547px"></div>
<div class="ab" style="left:67px;top:551px;width:2px;height:2px;background:#00FF00"></div>
<div class="code" style="left:90px;top:545px"><span class="k">begin</span></div>
<div class="ln" style="left:2px;top:561px;color:#000080">284</div>
<div class="ab" style="left:67px;top:568px;width:2px;height:2px;background:#00FF00"></div>
<div class="code" style="left:90px;top:562px">  <span class="k">repeat</span></div>
<div class="ln" style="left:2px;top:578px;color:#000080">285</div>
<div class="dot" style="left:31px;top:581px"></div>
<div class="ab" style="left:64px;top:586px;width:7px;height:1px;background:#00FF00"></div>
<div class="code" style="left:90px;top:579px">    I := L;</div>
<div class="ln" style="left:2px;top:595px;color:#000080">286</div>
<div class="dot" style="left:31px;top:598px"></div>
<div class="ab" style="left:67px;top:602px;width:2px;height:2px;background:#00FF00"></div>
<div class="code" style="left:90px;top:596px">    J := R;</div>
<div class="ln" style="left:2px;top:612px;color:#000080">287</div>
<div class="dot" style="left:31px;top:615px"></div>
<div class="ab" style="left:67px;top:619px;width:2px;height:2px;background:#00FF00"></div>
<div class="code" style="left:90px;top:613px">    P := SortList^[(L + R) <span class="k">shr</span> <span class="n">1</span>];</div>
<div class="ln" style="left:2px;top:629px;color:#000080">288</div>
<div class="ab" style="left:67px;top:636px;width:2px;height:2px;background:#00FF00"></div>
<div class="code" style="left:90px;top:630px">    <span class="k">repeat</span></div>
</div>
<svg class="ab" style="left:397px;top:395px" width="12" height="12"><path d="M1 4h5V1l5 5-5 5V8H1z" fill="#3399ee" stroke="#1a6fc0" stroke-width="0.8"/></svg>
<div class="ab" style="left:446px;top:143px;width:9px;height:9px;border:1px solid #00FF00;background:#000"></div>
<div class="ab" style="left:448px;top:147px;width:5px;height:1px;background:#00FF00"></div>
<div class="ab" style="left:446px;top:551px;width:9px;height:9px;border:1px solid #00FF00;background:#000"></div>
<div class="ab" style="left:448px;top:555px;width:5px;height:1px;background:#00FF00"></div>
<div class="ab" style="left:450px;top:116px;width:6px;height:1px;background:#00FF00"></div>
<div class="ab" style="left:450px;top:456px;width:6px;height:1px;background:#00FF00"></div>
<div class="ab" style="left:368px;top:710px;width:837px;height:19px;background:linear-gradient(#FEFEFB,#F0EEE4);border-bottom:2px solid #B9B5A2"></div>
<div class="ab" style="left:368px;top:710px;width:26px;height:18px;background:#ECE9D8"></div>
<div class="ab" style="left:393px;top:710px;width:1px;height:18px;background:#ACA899"></div>
<div class="ab" style="left:370px;top:713px;width:21px;height:14px;background:#000080"></div>
<div class="ln" style="left:370px;top:713px;color:#fff">317</div>
<div class="ab" style="left:395px;top:712px;width:16px;height:15px;background:linear-gradient(#D7E3FB,#B9CCF6);border:1px solid #B5C8F3;border-radius:2px"></div>
<svg class="ab" style="left:398px;top:715px" width="10" height="10"><path d="M6 1L2 5l4 4" stroke="#4D6185" stroke-width="2" fill="none"/></svg>
<div class="ab" style="left:413px;top:712px;width:36px;height:15px;background:linear-gradient(#D7E3FB,#B9CCF6);border:1px solid #B5C8F3;border-radius:2px"></div>
<svg class="ab" style="left:426px;top:716px" width="10" height="8"><path d="M1.5 0v7M3.5 0v7M5.5 0v7M7.5 0v7" stroke="#8EA8E0"/><path d="M2.5 0v7M4.5 0v7M6.5 0v7M8.5 0v7" stroke="#EEF4FF"/></svg>
<div class="ab" style="left:368px;top:728px;width:837px;height:23px;background:#ECE9D8"></div>
<div class="ab" style="left:368px;top:732px;width:59px;height:19px;background:linear-gradient(#FFFFFF,#E8E5D4);border-right:1px solid #fff;border-radius:2px 2px 0 0"></div>
<svg class="ab" style="left:373px;top:734px" width="10" height="14"><path d="M1 1l7 6-7 6z" fill="#A7A393"/></svg>
<div class="ab" style="left:390px;top:736px;width:11px;height:11px;border-radius:50%;background:radial-gradient(circle at 40% 40%,#f44,#d00)"></div>
<div class="ab" style="left:408px;top:736px;width:11px;height:11px;background:#A9A595"></div>
<div class="t" style="left:455px;top:733px">270:   1</div>
<div class="ab" style="left:511px;top:733px;width:1px;height:17px;background:#C9C5B5"></div>
<div class="t" style="left:515px;top:733px">Insert</div>
<div class="ab" style="left:586px;top:733px;width:1px;height:17px;background:#C9C5B5"></div>
<div class="ab" style="left:661px;top:733px;width:1px;height:17px;background:#C9C5B5"></div>
<div class="ab" style="left:368px;top:728px;width:837px;height:2px;background:#D6D2C2"></div>
<svg class="ab" style="left:660px;top:724px" width="100" height="30"><path d="M8 5.5L13.5 21.5H42L46.5 5.5" fill="#ECE9D8" stroke="#A8A494"/><path d="M46.5 5.5L47.5 21.5H85L89.5 5.5z" fill="#fff" stroke="#A8A494"/></svg>
<div class="t" style="left:675px;top:730px">Code</div>
<div class="t" style="left:709px;top:730px">History</div>
<div class="t" style="left:762px;top:733px;text-decoration:underline;text-decoration-skip-ink:none;width:443px;overflow:hidden">[CnPack] Подсветка Синтаксиса и Строк кода введена с версии 0.8.8. Метод подсветки изменён</div>
<div class="hdr" style="left:1px;top:756px;width:1204px;height:21px"></div>
<svg class="ab" style="left:5px;top:757px" width="20" height="19"><rect x="4.5" y="3.5" width="12" height="14" fill="#F0F0F0" stroke="#111"/><path d="M6 7h2M9 7h5M6 10h2M9 10h5M6 13h2M9 13h4" stroke="#888"/><path d="M1 4q0-3 2-2l2 1q1-2 3-1q2-1 3 1q2-2 4 0" stroke="#111" stroke-width="1.3" fill="none"/><rect x="17" y="5" width="1.5" height="3" fill="#e00"/><rect x="17" y="8" width="1.5" height="4" fill="#00f"/><rect x="17" y="12" width="1.5" height="4" fill="#0dd"/></svg>
<div class="t" style="left:28px;top:758px">Event Log</div>
<div class="hline" style="left:0;top:776px;width:1205px"></div>
<div class="ab" style="left:0;top:778px;width:1205px;height:149px;background:#fff;border-left:1px solid #ACA899"></div>
<div class="t" style="left:4px;top:778px;color:#800000;transform:scaleX(1);transform-origin:0 0">Thread Exit: Thread ID: 1444. Process SASPlanet.exe (3148)</div>
<div class="t" style="left:4px;top:794px;color:#800000;transform:scaleX(1);transform-origin:0 0">Thread Exit: Thread ID: 2688. Process SASPlanet.exe (3148)</div>
<div class="t" style="left:4px;top:810px;color:#800000;transform:scaleX(1);transform-origin:0 0">Thread Exit: Thread ID: 2980. Process SASPlanet.exe (3148)</div>
<div class="t" style="left:4px;top:826px;color:#800000;transform:scaleX(1);transform-origin:0 0">Thread Exit: Thread ID: 3100. Process SASPlanet.exe (3148)</div>
<div class="t" style="left:4px;top:842px;color:#0000FF;transform:scaleX(0.965);transform-origin:0 0">Module Unload: OLEPRO32.DLL. Process SASPlanet.exe (3148)</div>
<div class="t" style="left:4px;top:858px;color:#0000FF;transform:scaleX(0.984);transform-origin:0 0">Module Unload: libge.dll. Process SASPlanet.exe (3148)</div>
<div class="t" style="left:4px;top:874px;color:#0000FF;transform:scaleX(0.988);transform-origin:0 0">Module Unload: leveldb.dll. Process SASPlanet.exe (3148)</div>
<div class="t" style="left:4px;top:890px;color:#0000FF;transform:scaleX(0.985);transform-origin:0 0">Module Unload: libdb51.dll. Process SASPlanet.exe (3148)</div>
<div class="ab" style="left:1px;top:906px;width:1204px;height:16px;background:#008080"></div>
<div class="t" style="left:4px;top:906px;color:#fff;transform:scaleX(0.988);transform-origin:0 0">First chance exception at $7C812AFB. Exception class EAccessViolation with message &#x27;Access violation at address 0040814A in module &#x27;SASPlanet.exe&#x27;. Read of address 74737953&#x27;. Process SASPlanet.exe (3148)</div>
</body></html>
